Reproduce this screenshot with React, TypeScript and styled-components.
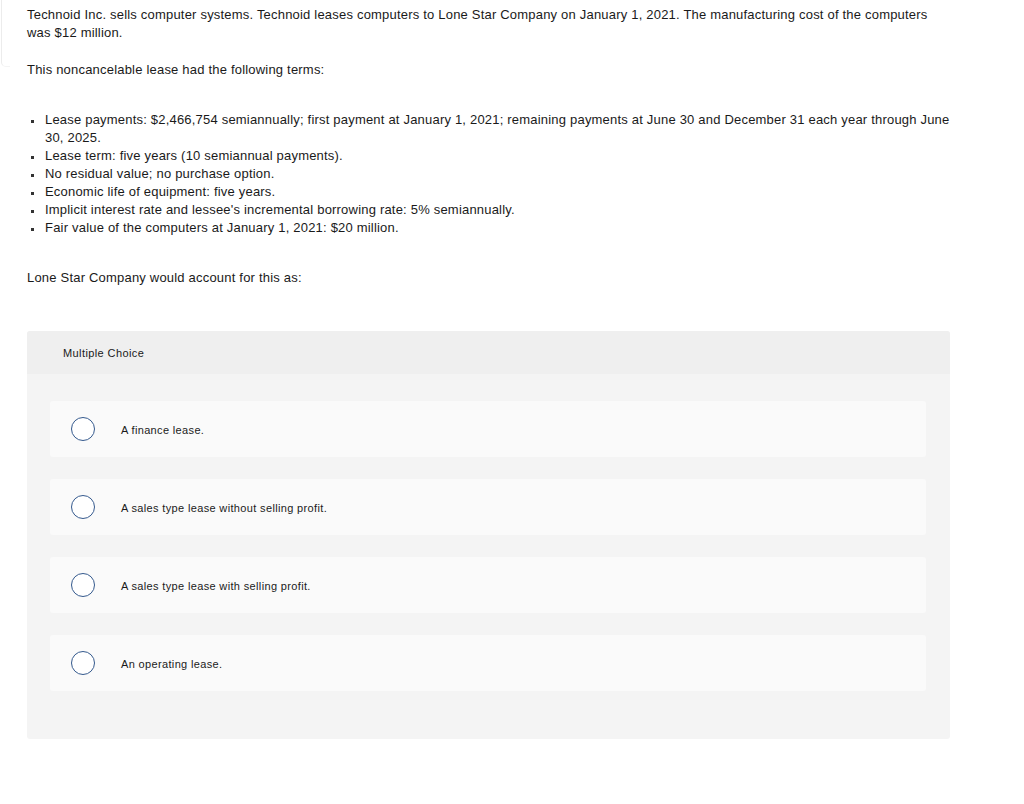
import styled, { createGlobalStyle } from "styled-components";

const GlobalStyle = createGlobalStyle`
  body {
    margin: 0;
    background: #ffffff;
    font-family: "Liberation Sans", Arial, sans-serif;
    color: #1a1a1a;
  }
`;

const Page = styled.div`
  position: relative;
  width: 923px;
  padding: 6px 0 60px 27px;
`;

/* faint frame edge seen at the top-left of the screenshot */
const EdgeMark = styled.div`
  position: absolute;
  left: 1px;
  top: 0;
  width: 8px;
  height: 66px;
  border-left: 1px solid #ececec;
  border-bottom: 1px solid #f4f4f4;
  border-bottom-left-radius: 5px;
`;

const Para = styled.p<{ $gap?: number }>`
  margin: 0 0 ${(p) => p.$gap ?? 0}px;
  font-size: 13px;
  line-height: 18px;
  letter-spacing: 0.2px;
`;

const Terms = styled.ul`
  margin: 0 0 32px;
  padding: 0;
  list-style: none;
`;

const Term = styled.li`
  position: relative;
  padding-left: 18px;
  font-size: 13px;
  line-height: 18px;
  letter-spacing: 0.2px;

  &::before {
    content: "";
    position: absolute;
    left: 4px;
    top: 9px;
    width: 3px;
    height: 3px;
    background: #333;
  }
`;

const Panel = styled.section`
  margin-top: 44px;
  background: #f4f4f4;
  border-radius: 3px;
  overflow: hidden;
`;

const PanelHead = styled.div`
  height: 43px;
  display: flex;
  align-items: center;
  padding-left: 36px;
  background: #efefef;
  font-size: 11px;
  letter-spacing: 0.4px;
  color: #1a1a1a;
`;

const Options = styled.div`
  display: flex;
  flex-direction: column;
  gap: 22px;
  padding: 27px 24px 48px 23px;
`;

const Option = styled.label`
  height: 56px;
  display: flex;
  align-items: center;
  gap: 26px;
  padding-left: 21px;
  background: #fafafa;
  border-radius: 3px;
  font-size: 11px;
  letter-spacing: 0.35px;
  color: #1a1a1a;
  cursor: pointer;
`;

const OptionText = styled.span`
  padding-top: 2px;
`;

const Radio = styled.span`
  width: 24px;
  height: 24px;
  box-sizing: border-box;
  border: 1.5px solid #34598d;
  border-radius: 50%;
  background: #fff;
  flex-shrink: 0;
`;

const choices = [
  "A finance lease.",
  "A sales type lease without selling profit.",
  "A sales type lease with selling profit.",
  "An operating lease.",
];

const terms = [
  "Lease payments: $2,466,754 semiannually; first payment at January 1, 2021; remaining payments at June 30 and December 31 each year through June 30, 2025.",
  "Lease term: five years (10 semiannual payments).",
  "No residual value; no purchase option.",
  "Economic life of equipment: five years.",
  "Implicit interest rate and lessee's incremental borrowing rate: 5% semiannually.",
  "Fair value of the computers at January 1, 2021: $20 million.",
];

export default function App() {
  return (
    <>
      <GlobalStyle />
      <Page>
        <EdgeMark />
        <Para $gap={19}>
          Technoid Inc. sells computer systems. Technoid leases computers to Lone Star Company on
          January 1, 2021. The manufacturing cost of the computers was $12 million.
        </Para>
        <Para $gap={32}>This noncancelable lease had the following terms:</Para>
        <Terms>
          {terms.map((t) => (
            <Term key={t}>{t}</Term>
          ))}
        </Terms>
        <Para>Lone Star Company would account for this as:</Para>

        <Panel>
          <PanelHead>Multiple Choice</PanelHead>
          <Options>
            {choices.map((c) => (
              <Option key={c}>
                <Radio />
                <OptionText>{c}</OptionText>
              </Option>
            ))}
          </Options>
        </Panel>
      </Page>
    </>
  );
}
